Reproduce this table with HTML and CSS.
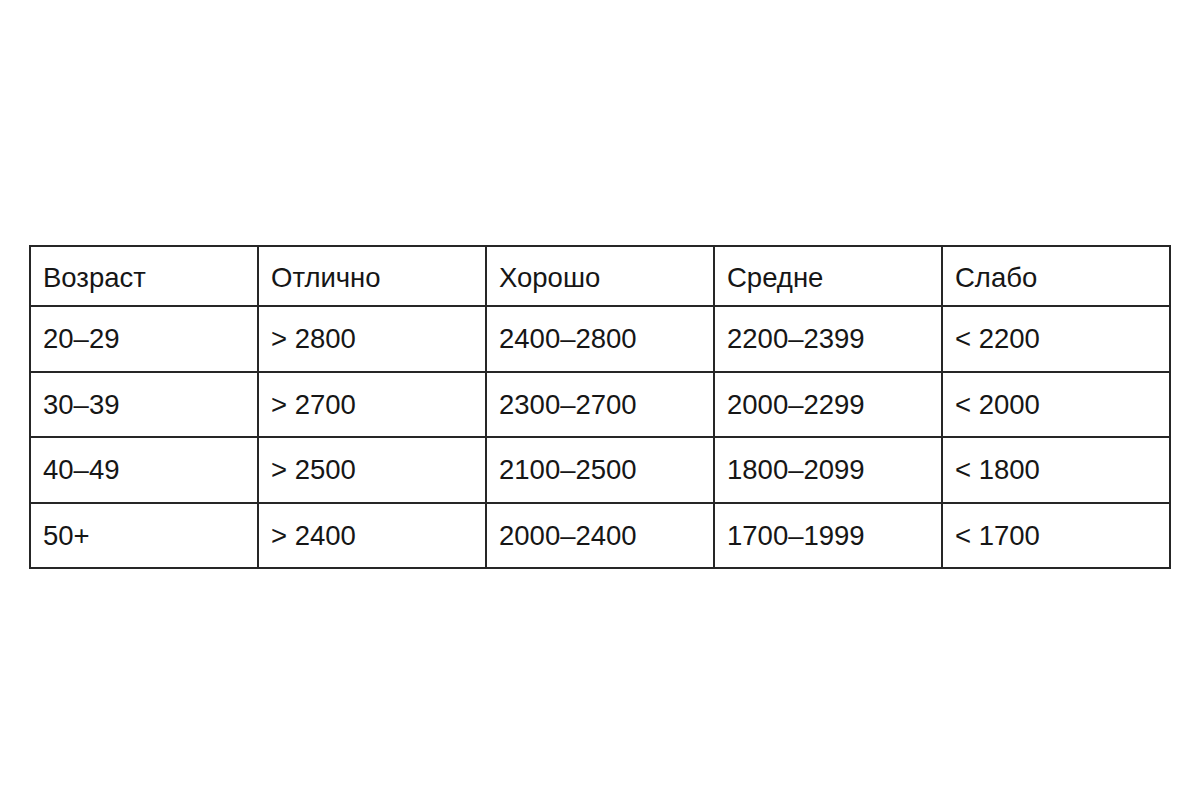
FILE: index.html
```html
<!DOCTYPE html>
<html lang="ru">
<head>
<meta charset="utf-8">
<title>Таблица</title>
<link rel="stylesheet" href="styles.css">
</head>
<body>
<div class="page">
  <table class="grid">
    <colgroup>
      <col class="c"><col class="c"><col class="c"><col class="c"><col class="c">
    </colgroup>
    <tr class="head">
      <td>Возраст</td><td>Отлично</td><td>Хорошо</td><td>Средне</td><td>Слабо</td>
    </tr>
    <tr class="row">
      <td>20–29</td><td>&gt; 2800</td><td>2400–2800</td><td>2200–2399</td><td>&lt; 2200</td>
    </tr>
    <tr class="row">
      <td>30–39</td><td>&gt; 2700</td><td>2300–2700</td><td>2000–2299</td><td>&lt; 2000</td>
    </tr>
    <tr class="row">
      <td>40–49</td><td>&gt; 2500</td><td>2100–2500</td><td>1800–2099</td><td>&lt; 1800</td>
    </tr>
    <tr class="row">
      <td>50+</td><td>&gt; 2400</td><td>2000–2400</td><td>1700–1999</td><td>&lt; 1700</td>
    </tr>
  </table>
</div>
</body>
</html>
```
FILE: styles.css
```css
html, body {
  margin: 0;
  padding: 0;
  background: #ffffff;
}
.page {
  width: 1200px;
  height: 800px;
  padding: 245px 0 0 29px;
  box-sizing: border-box;
}
.grid {
  border-collapse: collapse;
  table-layout: fixed;
  width: 1142px;
  font-family: "Liberation Sans", Arial, sans-serif;
  font-size: 27.5px;
  color: #161616;
}
.grid td {
  border: 2px solid #262626;
  padding: 0 0 0 12px;
  vertical-align: middle;
  line-height: 1;
  white-space: nowrap;
}
.head td {
  height: 55px;
  padding-top: 3px;
}
.row td {
  height: 63.5px;
}
```
